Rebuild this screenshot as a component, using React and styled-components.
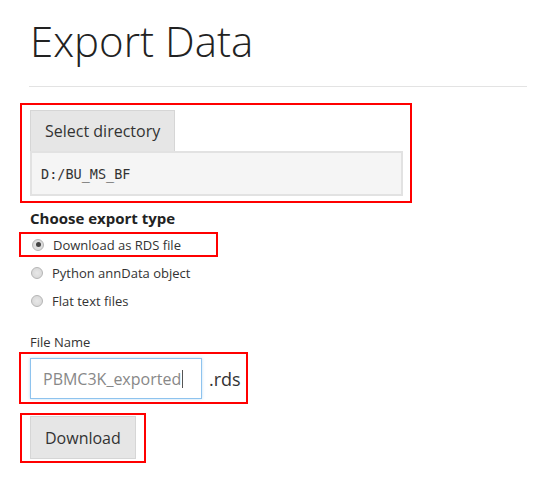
import styled, { createGlobalStyle } from "styled-components";

const GlobalStyle = createGlobalStyle`
  html, body {
    margin: 0;
    padding: 0;
    background: #fff;
  }

  body {
    font-family: "Open Sans", "DejaVu Sans", sans-serif;
    color: #333;
  }
`;

const Page = styled.div`
  padding: 18px 16px 0 30px;
`;

const Title = styled.h1`
  margin: 0;
  font-size: 42px;
  line-height: 46px;
  font-weight: 300;
  color: #222;
`;

const Rule = styled.hr`
  margin: 22px 0 0 -1px;
  border: 0;
  border-top: 1px solid #e3e3e3;
`;

const Highlight = styled.div`
  border: 2px solid #f00;
  width: ${(p) => p.$width}px;
  box-sizing: border-box;
  margin: ${(p) => p.$margin};
  padding: ${(p) => p.$padding};
`;

const GreyButton = styled.button`
  display: block;
  font-family: inherit;
  font-size: 16px;
  color: #333;
  background: #e6e6e6;
  border: 1px solid #d6d6d6;
  border-bottom: ${(p) => (p.$attached ? "0" : "1px solid #d6d6d6")};
  padding: 0 ${(p) => p.$padX}px;
  height: ${(p) => p.$height}px;
  cursor: pointer;
`;

const DirBox = styled.div`
  width: 373px;
  height: 45px;
  box-sizing: border-box;
  border: 2px solid #e2e2e2;
  background: #f5f5f5;
  padding-left: 9px;
  display: flex;
  align-items: center;
  font-family: "DejaVu Sans Mono", monospace;
  font-size: 13.5px;
  color: #333;
`;

const SectionLabel = styled.div`
  margin-top: 5px;
  font-size: 15px;
  font-weight: 700;
  line-height: 21px;
  color: #222;
`;

const RadioGroup = styled.div`
  display: flex;
  flex-direction: column;
  gap: 7px;
  margin-top: 5px;
`;

const RadioRow = styled.label`
  display: flex;
  align-items: center;
  gap: 9px;
  height: 21px;
  font-size: 13px;
  color: #333;
  padding-left: ${(p) => (p.$boxed ? "10px" : "0")};
`;

const RadioCircle = styled.span`
  width: 12px;
  height: 12px;
  box-sizing: border-box;
  border-radius: 50%;
  border: 1px solid #b5b5b5;
  background: radial-gradient(circle, #e8e8e8 0%, #d4d4d4 100%);
  display: flex;
  align-items: center;
  justify-content: center;
  margin-left: 1px;

  &::after {
    content: "";
    width: 5px;
    height: 5px;
    border-radius: 50%;
    background: ${(p) => (p.$checked ? "#444" : "transparent")};
  }
`;

const FieldLabel = styled.div`
  margin-top: 22px;
  font-size: 13px;
  line-height: 19px;
  color: #333;
`;

const InputRow = styled.div`
  display: flex;
  align-items: center;
  gap: 7px;
`;

const TextBox = styled.div`
  width: 172px;
  height: 41px;
  box-sizing: border-box;
  border: 1px solid #8ec3ee;
  box-shadow: 0 0 3px rgba(102, 175, 233, 0.4);
  padding-left: 12px;
  display: flex;
  align-items: center;
  font-size: 16px;
  color: #888;
`;

const Caret = styled.span`
  display: inline-block;
  width: 1px;
  height: 18px;
  margin-left: 1px;
  background: #555;
`;

const Suffix = styled.span`
  font-size: 18px;
  color: #333;
`;

const radios = [
  { label: "Download as RDS file", checked: true },
  { label: "Python annData object" },
  { label: "Flat text files" },
];

export default function App() {
  const [first, ...rest] = radios;

  return (
    <>
      <GlobalStyle />
      <Page>
        <Title>Export Data</Title>
        <Rule />

        <Highlight $width={392} $margin="16px 0 0 -10px" $padding="5px 7px 5px 8px">
          <GreyButton $attached $height={41} $padX={14}>
            Select directory
          </GreyButton>
          <DirBox>D:/BU_MS_BF</DirBox>
        </Highlight>

        <SectionLabel>Choose export type</SectionLabel>
        <RadioGroup>
          <Highlight $width={199} $margin="-2px 0 -2px -11px" $padding="0">
            <RadioRow $boxed>
              <RadioCircle $checked={first.checked} />
              {first.label}
            </RadioRow>
          </Highlight>
          {rest.map((r) => (
            <RadioRow key={r.label}>
              <RadioCircle $checked={r.checked} />
              {r.label}
            </RadioRow>
          ))}
        </RadioGroup>

        <FieldLabel>File Name</FieldLabel>
        <Highlight $width={229} $margin="0 0 0 -11px" $padding="4px 0 3px 9px">
          <InputRow>
            <TextBox>
              PBMC3K_exported
              <Caret />
            </TextBox>
            <Suffix>.rds</Suffix>
          </InputRow>
        </Highlight>

        <Highlight $width={126} $margin="9px 0 0 -10px" $padding="1px 0 2px 8px">
          <GreyButton $height={43} $padX={14}>
            Download
          </GreyButton>
        </Highlight>
      </Page>
    </>
  );
}
